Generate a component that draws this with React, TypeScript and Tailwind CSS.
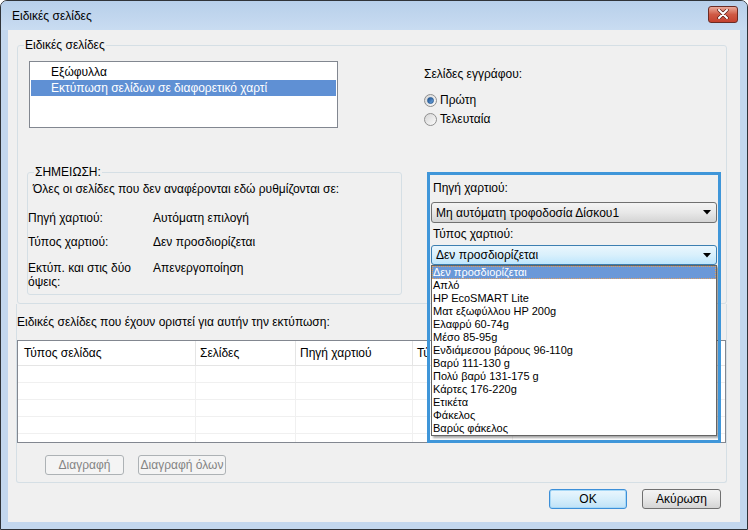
import React from "react";

const font = { fontFamily: '"Liberation Sans", Arial, sans-serif' };

function Radio({ checked, label }: { checked?: boolean; label: string }) {
  return (
    <div className="flex items-center h-[14px] gap-[3px]">
      <div className="w-[13px] h-[13px] rounded-full border border-[#8f8f8f] bg-gradient-to-br from-[#d6d6d6] to-[#fbfbfb] flex items-center justify-center">
        {checked && (
          <div className="w-[7px] h-[7px] rounded-full bg-gradient-to-br from-[#1c4f8c] to-[#6fa8e3] border border-[#2a5d96]" />
        )}
      </div>
      <span className="leading-[14px]">{label}</span>
    </div>
  );
}

function Arrow() {
  return (
    <svg width="8" height="5" viewBox="0 0 8 5" className="shrink-0">
      <path d="M0 0H8L4 4.5Z" fill="#000" />
    </svg>
  );
}

const items = [
  "Δεν προσδιορίζεται",
  "Απλό",
  "HP EcoSMART Lite",
  "Ματ εξωφύλλου HP 200g",
  "Ελαφρύ 60-74g",
  "Μέσο 85-95g",
  "Ενδιάμεσου βάρους 96-110g",
  "Βαρύ 111-130 g",
  "Πολύ βαρύ 131-175 g",
  "Κάρτες 176-220g",
  "Ετικέτα",
  "Φάκελος",
  "Βαρύς φάκελος",
];

export default function App() {
  return (
    <div
      style={font}
      className="w-[748px] h-[530px] text-[12px] text-black border border-[#2f3338] rounded-t-[7px] overflow-hidden flex flex-col bg-[#c3d7ee]"
    >
      {/* Title bar */}
      <div className="h-[29px] shrink-0 flex items-center justify-between pl-[11px] pr-[9px] bg-gradient-to-b from-[#b7cfea] to-[#c9dcf1]">
        <span className="leading-[14px] mt-[1px]">Ειδικές σελίδες</span>
        <div className="w-[30px] h-[17px] mt-[-3px] rounded-[3px] border border-[#6b2b24] bg-gradient-to-b from-[#e9a99a] via-[#cf5a45] to-[#c4412f] flex items-center justify-center">
          <svg width="12" height="10" viewBox="0 0 12 10">
            <path d="M2 1L10 9M10 1L2 9" stroke="#5a1c16" strokeWidth="3.4" strokeLinecap="round" />
            <path d="M2 1L10 9M10 1L2 9" stroke="#fff" strokeWidth="2" strokeLinecap="round" />
          </svg>
        </div>
      </div>

      {/* Client area */}
      <div className="flex-1 flex px-[7px] pb-[7px]">
        <div className="flex-1 bg-[#f0f0f0] flex flex-col pr-[13px]">
          {/* Group box 1 */}
          <div className="relative mt-[15px] ml-[9px] h-[259px] border border-[#d5dfe5] rounded-[3px]">
            <span className="absolute -top-[8px] left-[6px] px-[1px] bg-[#f0f0f0] leading-[14px]">Ειδικές σελίδες</span>

            {/* top row */}
            <div className="flex items-start">
              <div className="mt-[15px] ml-[11px] w-[309px] h-[67px] border border-[#828790] bg-white pt-[2px] px-[1px]">
                <div className="h-[16px] leading-[16px] pl-[20px]">Εξώφυλλα</div>
                <div className="h-[16px] leading-[16px] pl-[20px] bg-[#5f90d4] text-white">Εκτύπωση σελίδων σε διαφορετικό χαρτί</div>
              </div>
              <div className="ml-[86px] mt-[21px] flex flex-col">
                <span className="leading-[14px]">Σελίδες εγγράφου:</span>
                <div className="mt-[12px] flex flex-col gap-[5px]">
                  <Radio checked label="Πρώτη" />
                  <Radio label="Τελευταία" />
                </div>
              </div>
            </div>

            {/* bottom row */}
            <div className="flex items-start mt-[44px]">
              <div className="relative ml-[9px] w-[375px] h-[123px] border border-[#d5dfe5] rounded-[3px] pt-[9px]">
                <span className="absolute -top-[8px] left-[6px] px-[1px] bg-[#f0f0f0] leading-[14px]">ΣΗΜΕΙΩΣΗ:</span>
                <div className="pl-[5px] leading-[14px]">Όλες οι σελίδες που δεν αναφέρονται εδώ ρυθμίζονται σε:</div>
                <div className="mt-[15px] grid grid-cols-[125px_1fr] leading-[14px]">
                  <div className="h-[24px]">Πηγή χαρτιού:</div>
                  <div className="h-[24px]">Αυτόματη επιλογή</div>
                  <div className="h-[26px]">Τύπος χαρτιού:</div>
                  <div className="h-[26px]">Δεν προσδιορίζεται</div>
                  <div>Εκτύπ. και στις δύο όψεις:</div>
                  <div>Απενεργοποίηση</div>
                </div>
              </div>

              <div className="relative ml-[25px] w-[294px] pt-[9px] px-[4px]">
                <div className="leading-[14px] pl-[2px]">Πηγή χαρτιού:</div>
                <div className="mt-[7px] h-[21px] rounded-[3px] border border-[#707070] bg-gradient-to-b from-[#f4f4f4] via-[#e8e8e8] to-[#d4d4d4] flex items-center justify-between pl-[4px] pr-[5px]">
                  <span className="leading-[14px]">Μη αυτόματη τροφοδοσία Δίσκου1</span>
                  <Arrow />
                </div>
                <div className="mt-[4px] leading-[14px] pl-[2px]">Τύπος χαρτιού:</div>
                <div className="mt-[4px] h-[20px] rounded-[3px] border border-[#3c7fb1] bg-gradient-to-b from-[#eaf6fd] via-[#d9f0fc] to-[#bee6fd] flex items-center justify-between pl-[4px] pr-[5px]">
                  <span className="leading-[14px]">Δεν προσδιορίζεται</span>
                  <Arrow />
                </div>

                {/* dropdown list */}
                <div className="absolute z-10 left-[4px] top-[93px] w-[286px] border border-[#646464] bg-white shadow-[2px_2px_2px_rgba(0,0,0,0.35)] text-[11px]">
                  {items.map((it, i) => (
                    <div
                      key={it}
                      className={
                        i === 0
                          ? "h-[13px] leading-[13px] pl-[1px] bg-[#6a98d8] text-white outline outline-1 outline-dotted outline-[#e0a060] -outline-offset-1"
                          : "h-[13px] leading-[13px] pl-[1px]"
                      }
                    >
                      {it}
                    </div>
                  ))}
                </div>

                {/* annotation frame */}
                <div className="absolute z-20 left-0 top-0 w-[294px] h-[271px] border-[3px] border-[#3f96d9] pointer-events-none" />
              </div>
            </div>
          </div>

          {/* Group box 2 */}
          <div className="ml-[8px] h-[179px] border border-t-0 border-[#d5dfe5] rounded-b-[3px] flex flex-col pt-[11px]">
            <div className="leading-[14px]">Ειδικές σελίδες που έχουν οριστεί για αυτήν την εκτύπωση:</div>
            <div className="mt-[11px] h-[103px] border border-[#828790] bg-white overflow-hidden">
              <div className="flex h-[25px] border-b border-[#e5e5e5] items-center">
                <div className="w-[178px] h-full flex items-center pl-[6px] border-r border-[#e5e5e5]">Τύπος σελίδας</div>
                <div className="w-[100px] h-full flex items-center pl-[4px] border-r border-[#e5e5e5]">Σελίδες</div>
                <div className="w-[117px] h-full flex items-center pl-[4px] border-r border-[#e5e5e5]">Πηγή χαρτιού</div>
                <div className="w-[14px] h-full flex items-center pl-[4px] overflow-hidden whitespace-nowrap">Τύπος χαρτιού</div>
              </div>
              {[0, 1, 2, 3, 4].map((r) => (
                <div key={r} className="flex h-[17px] border-b border-[#f0f0f0]">
                  <div className="w-[178px] border-r border-[#f0f0f0]" />
                  <div className="w-[100px] border-r border-[#f0f0f0]" />
                  <div className="w-[117px] border-r border-[#f0f0f0]" />
                  <div className="w-[100px] border-r border-[#f0f0f0]" />
                </div>
              ))}
            </div>
            <div className="flex mt-[12px] ml-[28px] gap-[14px]">
              <div className="w-[79px] h-[20px] rounded-[3px] border border-[#adb2b5] bg-[#f4f4f4] text-[#838383] flex items-center justify-center">Διαγραφή</div>
              <div className="w-[88px] h-[20px] rounded-[3px] border border-[#adb2b5] bg-[#f4f4f4] text-[#838383] flex items-center justify-center">Διαγραφή όλων</div>
            </div>
          </div>

          {/* OK / Cancel */}
          <div className="flex justify-end gap-[15px] mt-[6px] pr-[6px]">
            <div className="w-[78px] h-[20px] rounded-[3px] border border-[#3c8fd8] bg-gradient-to-b from-[#eaf6fd] via-[#d6eefb] to-[#bfe2f7] shadow-[inset_0_0_0_1px_#a6d8f7] flex items-center justify-center">OK</div>
            <div className="w-[79px] h-[20px] rounded-[3px] border border-[#707070] bg-gradient-to-b from-[#f4f4f4] via-[#e8e8e8] to-[#d4d4d4] flex items-center justify-center">Ακύρωση</div>
          </div>
        </div>
      </div>
    </div>
  );
}
